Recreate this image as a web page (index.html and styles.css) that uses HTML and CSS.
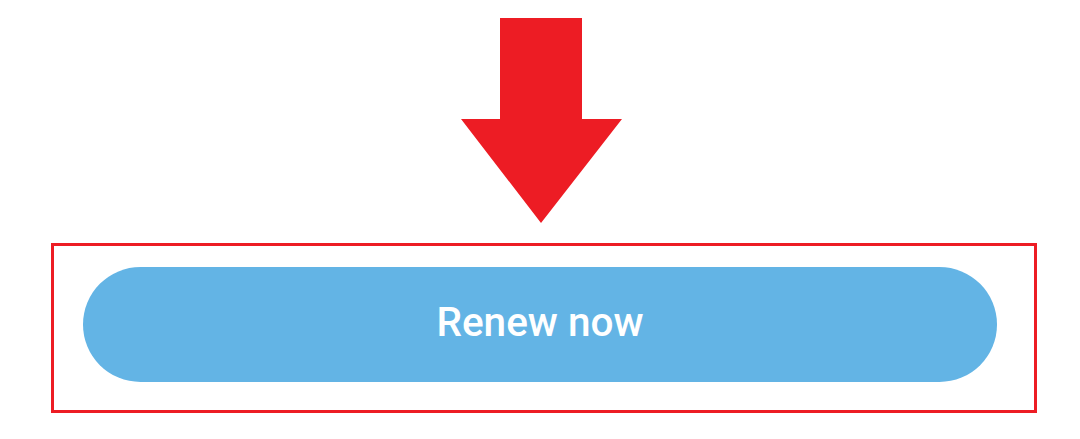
FILE: index.html
```html
<!DOCTYPE html>
<html>
<head>
<meta charset="utf-8">
<link rel="stylesheet" href="styles.css">
</head>
<body>
<div class="page">
  <div class="arrow-row">
    <svg class="arrow" width="161" height="205" viewBox="0 0 161 205">
      <polygon points="39,0 121,0 121,101 161,101 80,205 0,101 39,101" fill="#ed1c24"/>
    </svg>
  </div>
  <div class="frame">
    <button class="renew">Renew now</button>
  </div>
</div>
</body>
</html>
```
FILE: styles.css
```css
html, body {
  margin: 0;
  padding: 0;
  background: #ffffff;
}
.page {
  width: 1080px;
  height: 439px;
  padding-top: 18px;
  box-sizing: border-box;
}
.arrow-row {
  display: flex;
  padding-left: 461px;
  height: 205px;
}
.arrow {
  display: block;
}
.frame {
  margin-top: 20px;
  margin-left: 51px;
  width: 986px;
  height: 170px;
  box-sizing: border-box;
  border: 3px solid #ed1c24;
  padding: 21px 0 0 29px;
}
.renew {
  display: flex;
  align-items: center;
  justify-content: center;
  width: 914px;
  height: 115px;
  border: none;
  border-radius: 58px;
  background: #63b4e5;
  color: #ffffff;
  font-family: Roboto, "Liberation Sans", sans-serif;
  font-weight: 500;
  font-size: 40.5px;
  padding: 0 0 5px 0;
  margin: 0;
  box-sizing: border-box;
}
```
